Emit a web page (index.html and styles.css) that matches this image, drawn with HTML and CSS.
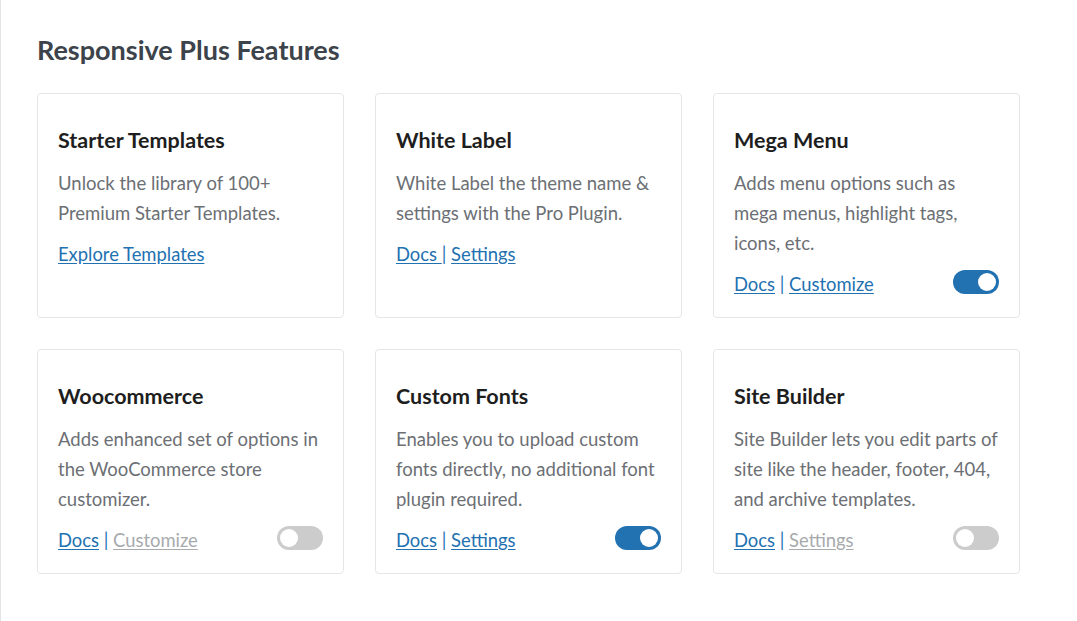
FILE: index.html
```html
<!DOCTYPE html>
<html lang="en">
<head>
<meta charset="utf-8">
<title>Responsive Plus Features</title>
<link rel="stylesheet" href="styles.css">
</head>
<body>
<main class="page">
  <h1 class="page-title">Responsive Plus Features</h1>
  <div class="grid">
    <section class="card">
      <h2 class="card-title">Starter Templates</h2>
      <p class="card-desc">Unlock the library of 100+ Premium Starter Templates.</p>
      <div class="card-foot">
        <div class="links"><a href="#" class="link">Explore Templates</a></div>
      </div>
    </section>
    <section class="card">
      <h2 class="card-title">White Label</h2>
      <p class="card-desc">White Label the theme name &amp; settings with the Pro Plugin.</p>
      <div class="card-foot">
        <div class="links"><a href="#" class="link">Docs </a><span class="sep">|</span> <a href="#" class="link">Settings</a></div>
      </div>
    </section>
    <section class="card">
      <h2 class="card-title">Mega Menu</h2>
      <p class="card-desc">Adds menu options such as mega menus, highlight tags, icons, etc.</p>
      <div class="card-foot">
        <div class="links"><a href="#" class="link">Docs</a> <span class="sep">|</span> <a href="#" class="link">Customize</a></div>
        <span class="toggle on"><span class="knob"></span></span>
      </div>
    </section>
    <section class="card">
      <h2 class="card-title">Woocommerce</h2>
      <p class="card-desc">Adds enhanced set of options in the WooCommerce store customizer.</p>
      <div class="card-foot">
        <div class="links"><a href="#" class="link">Docs</a> <span class="sep">|</span> <a href="#" class="link disabled">Customize</a></div>
        <span class="toggle"><span class="knob"></span></span>
      </div>
    </section>
    <section class="card">
      <h2 class="card-title">Custom Fonts</h2>
      <p class="card-desc">Enables you to upload custom fonts directly, no additional font plugin required.</p>
      <div class="card-foot">
        <div class="links"><a href="#" class="link">Docs</a> <span class="sep">|</span> <a href="#" class="link">Settings</a></div>
        <span class="toggle on"><span class="knob"></span></span>
      </div>
    </section>
    <section class="card">
      <h2 class="card-title">Site Builder</h2>
      <p class="card-desc">Site Builder lets you edit parts of site like the header, footer, 404, and archive templates.</p>
      <div class="card-foot">
        <div class="links"><a href="#" class="link">Docs</a> <span class="sep">|</span> <a href="#" class="link disabled">Settings</a></div>
        <span class="toggle"><span class="knob"></span></span>
      </div>
    </section>
  </div>
</main>
</body>
</html>
```
FILE: styles.css
```css
html, body {
  margin: 0;
  padding: 0;
  background: #ffffff;
}
body {
  font-family: Lato, "Open Sans", "Liberation Sans", sans-serif;
  border-left: 1px solid #e2e4e7;
  min-height: 621px;
  box-sizing: border-box;
}
.page {
  padding: 32px 0 0 36px;
  width: 982px;
}
.page-title {
  margin: 0 0 25px 0;
  font-size: 27px;
  line-height: 36px;
  font-weight: 700;
  color: #3c434a;
}
.grid {
  display: grid;
  grid-template-columns: repeat(3, 307px);
  column-gap: 31px;
  row-gap: 31px;
}
.card {
  border: 1px solid #e4e6e9;
  border-radius: 4px;
  padding: 33px 20px 18px 20px;
  min-height: 225px;
  box-sizing: border-box;
  display: flex;
  flex-direction: column;
}
.card-title {
  margin: 0;
  font-size: 21.5px;
  line-height: 26px;
  font-weight: 700;
  color: #1e1e1e;
}
.card-desc {
  margin: 15px 0 0 0;
  font-size: 18.5px;
  line-height: 30px;
  color: #6c6f74;
}
.card-foot {
  margin-top: 11px;
  display: flex;
  align-items: center;
  justify-content: space-between;
  height: 30px;
}
.links {
  font-size: 18.4px;
  line-height: 30px;
  color: #2271b1;
}
.link {
  color: #2271b1;
  text-decoration: underline;
  text-underline-offset: 2px;
}
.link.disabled {
  color: #a7aaad;
}
.sep {
  color: #2271b1;
}
.toggle {
  position: relative;
  display: inline-block;
  width: 46px;
  height: 24px;
  border-radius: 12px;
  background: #cccccc;
  margin-top: -4px;
}
.toggle.on {
  background: #2271b1;
}
.knob {
  position: absolute;
  top: 3px;
  left: 3px;
  width: 18px;
  height: 18px;
  border-radius: 50%;
  background: #ffffff;
}
.toggle.on .knob {
  left: 25px;
}
```
